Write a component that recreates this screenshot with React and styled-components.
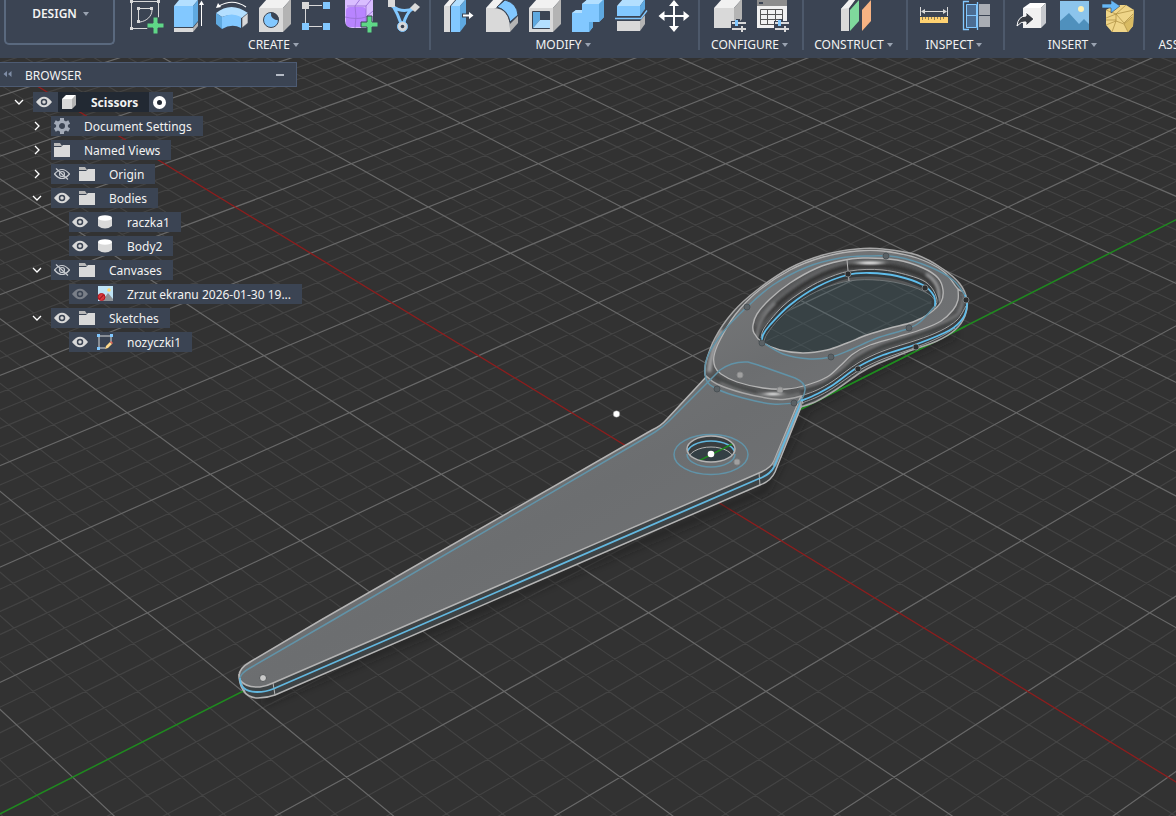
import React, { useState } from "react";
import styled, { createGlobalStyle } from "styled-components";

const GlobalStyle = createGlobalStyle`
  * {
    box-sizing: border-box;
  }
  body {
    margin: 0;
    background: #323232;
    color: #f2f2f2;
    font-family: "Noto Sans", Roboto, sans-serif;
    font-size: 12px;
    overflow: hidden;
  }
  button {
    border: 0;
    padding: 0;
    background: none;
    color: inherit;
    font: inherit;
    cursor: pointer;
  }
`;

const Page = styled.div`
  display: flex;
  flex-direction: column;
  height: 100vh;
`;

/* ---------- toolbar ---------- */

const Toolbar = styled.header`
  display: flex;
  align-items: flex-start;
  flex: none;
  height: 58px;
  padding-left: 4px;
  overflow: hidden;
  background: #3b4453;
`;

const WorkspaceButton = styled.button`
  display: flex;
  align-items: flex-start;
  justify-content: center;
  flex: none;
  gap: 6px;
  width: 111px;
  height: 45px;
  margin-right: 6px;
  padding: 6px 0 0 2px;
  border: 2px solid #5a697e;
  border-top: 0;
  border-radius: 0 0 5px 5px;
  font-size: 12px;
  font-weight: 600;
  line-height: 16px;
`;

const Group = styled.section`
  display: flex;
  flex-direction: column;
  align-items: center;
  flex: none;
  min-width: ${(p) => p.$width}px;
  height: 50px;
  border-right: 2px solid #4d596b;
`;

const Tools = styled.div`
  display: flex;
  flex: none;
  height: 37px;
`;

const Tool = styled.button`
  width: 43px;
  height: 34px;
  svg {
    display: block;
  }
`;

const GroupMenu = styled.button`
  display: flex;
  flex: none;
  gap: 3px;
  padding-right: 3px;
  font-size: 12px;
  line-height: 16px;
`;

const Caret = styled.span`
  margin-top: 6px;
  border: 3px solid transparent;
  border-top: 4px solid #9aa3b1;
  border-bottom: 0;
`;

/* ---------- viewport ---------- */

const Viewport = styled.main`
  position: relative;
  flex: 1;
  min-height: 0;
`;

const Scene = styled.svg`
  position: absolute;
  inset: 0;
  width: 100%;
  height: 100%;
`;

const Browser = styled.aside`
  position: relative;
  width: 297px;
  padding-top: 4px;
`;

const BrowserHead = styled.div`
  display: flex;
  align-items: center;
  height: 25px;
  padding: 0 12px 0 3px;
  border: 1px solid #4d5b73;
  border-left: 0;
  background: #3b4453;
`;

const BrowserTitle = styled.h2`
  flex: 1;
  margin: 0 0 0 13px;
  padding-top: 2px;
  font-size: 12px;
  font-weight: 400;
`;

const SmallButton = styled.button`
  display: flex;
  align-items: center;
  height: 20px;
`;

const Tree = styled.ul`
  display: flex;
  flex-direction: column;
  gap: 4px;
  margin: 5px 0 0;
  padding: 0;
  list-style: none;
`;

const Row = styled.li`
  display: flex;
  height: 20px;
  padding-left: ${(p) => 5 + p.$level * 18}px;
`;

const Toggle = styled.button`
  display: flex;
  align-items: center;
  justify-content: center;
  flex: none;
  width: 28px;
  height: 20px;
`;

const Indent = styled.span`
  flex: none;
  width: 28px;
`;

const Item = styled.div`
  display: flex;
  align-items: center;
  flex: none;
  background: #3b4453;
`;

const Slot = styled.span`
  display: flex;
  align-items: center;
  flex: none;
  width: 25px;
  height: 20px;
  padding-left: 3px;
`;

const EyeButton = styled.button`
  display: flex;
  align-items: center;
  flex: none;
  width: 25px;
  height: 20px;
  padding-left: 3px;
  opacity: ${(p) => (p.$dim ? 0.4 : 1)};
`;

const Name = styled.span`
  display: flex;
  align-items: center;
  height: 20px;
  background: ${(p) => (p.$active ? "#222933" : "transparent")};
  font-weight: ${(p) => (p.$active ? 700 : 400)};
`;

const Text = styled.span`
  padding: 2px 11px 0 8px;
  line-height: 20px;
  white-space: nowrap;
`;

const ActiveRadio = styled.input`
  appearance: none;
  width: 13px;
  height: 13px;
  margin: 0 7px 0 4px;
  border: 4px solid #fff;
  border-radius: 50%;
  background: #222933;
`;

/* ---------- toolbar icons, each drawn on a 43x34 cell ---------- */

const WHITE = "#f1f1f1";
const GREY = "#d9d9d9";
const DARK = "#b4b4b4";
const BLUE = "#82c8ff";
const LIGHT = "#b3dfff";
const DEEP = "#5fa9e0";
const INK = "#3b4453";

const Plus = ({ x, y }) => (
  <path
    d={`M${x - 2} ${y - 8}h5v6h6v5h-6v6h-5v-6h-6v-5h6z`}
    fill="#5fd787"
    stroke={INK}
    strokeWidth="1"
  />
);

const Sliders = ({ y }) => (
  <g>
    <path d={`M23 ${y - 2}h5v-2h4v2h7v9h-3v3h-4v-3h-9z`} fill={INK} />
    <path d={`M24 ${y}h14M24 ${y + 6}h14`} stroke={GREY} strokeWidth="2" />
    <path d={`M28.500 ${y - 3}v6`} stroke={BLUE} strokeWidth="3" />
    <path d={`M34 ${y + 3}v6`} stroke={GREY} strokeWidth="2" />
  </g>
);

const icons = {
  sketch: (
    <g>
      <path d="M6.5 1.5h27v16M6.5 1.5v27h16" fill="none" stroke={GREY} />
      <path d="M13.5 8.5h13M13.5 8.5v13M27 10c0 6-5 11-12 12" fill="none" stroke={GREY} />
      <path d="M5 0h3v3H5zM32 0h3v3h-3zM5 27h3v3H5zM12 7h3v3h-3zM25 7h3v3h-3zM12 20h3v3h-3z" fill={GREY} />
      <Plus x={30} y={25} />
    </g>
  ),
  extrude: (
    <g>
      <path d="M6 6L11 0H30L25 6z" fill={LIGHT} />
      <path d="M6 6h19v21H6z" fill={BLUE} />
      <path d="M25 6l5-6v21l-5 6z" fill={DEEP} />
      <path d="M6 28h19v4H6z" fill={GREY} />
      <path d="M25 28l5-6v4l-5 6z" fill={DARK} />
      <path d="M33.500 26V4" stroke="#fff" />
      <path d="M31 5l2.500-4.500L36 5z" fill="#fff" />
    </g>
  ),
  revolve: (
    <g>
      <path d="M5 13Q20 1 37 13L31 18Q20 13 11 17z" fill={LIGHT} />
      <path d="M5 13l6 4v12l-6-5z" fill={DEEP} />
      <path d="M11 17q10-5 19 0v11q-9-5-19 1z" fill={BLUE} />
      <path d="M31 18l6-5v10l-6 5z" fill={GREY} stroke={INK} strokeWidth="0.600" />
      <path d="M8 6q14-8 27 1" fill="none" stroke="#fff" strokeWidth="1.200" />
      <path d="M5 8l2-5 3 4z" fill="#fff" />
    </g>
  ),
  hole: (
    <g>
      <path d="M5 8l8-9h24l-8 9z" fill={WHITE} />
      <path d="M5 8h24v24H5z" fill={GREY} />
      <path d="M29 8l8-9v25l-8 8z" fill={DARK} />
      <circle cx="17" cy="20" r="7.500" fill={BLUE} stroke={INK} />
      <path d="M17 12.500q-1 7 8 8a7.500 7.500 0 0 0-8-8z" fill={INK} />
    </g>
  ),
  pattern: (
    <g>
      <path d="M12 5.500h13M12 26.500h13M8.500 9v14" stroke={GREY} />
      <path d="M5 2h7v7H5z" fill={GREY} />
      <path d="M26 2h7v7h-7zM5 23h7v7H5zM26 23h7v7h-7z" fill={BLUE} />
    </g>
  ),
  form: (
    <g>
      <rect x="5" y="-6" width="28" height="34" rx="7" fill="#d9bdff" />
      <rect x="6" y="7" width="20" height="20" rx="4" fill="#b884ff" />
      <path d="M5 17q12 3 21 0l7-6M15 28q2-12 0-22l6-8M26 25V6l5-6M7 6h19" fill="none" stroke="#9a70d6" strokeWidth="0.900" />
      <Plus x={29} y={24} />
    </g>
  ),
  links: (
    <g>
      <path d="M9 4q6 10 10 22M31 8q-8 4-11 18M9 6q11 8 22 2" fill="none" stroke={BLUE} strokeWidth="3" />
      <path d="M17 12h7l-4 6z" fill={INK} />
      <path d="M5-1h7v8H5z" fill={GREY} />
      <path d="M32 3l5 4-5 5-5-4z" fill={GREY} />
      <circle cx="19.500" cy="26.500" r="5" fill={GREY} stroke={BLUE} />
      <circle cx="19.500" cy="26.500" r="1.800" fill={INK} />
    </g>
  ),
  press: (
    <g>
      <path d="M8 6l6-7h6l-6 7z" fill={WHITE} />
      <path d="M8 6h6v26H8z" fill={GREY} />
      <path d="M15 6l6-7h9l-6 7z" fill={LIGHT} />
      <path d="M15 6h9v26h-9z" fill={BLUE} />
      <path d="M24 6l6-7v25l-6 8z" fill={DEEP} />
      <path d="M26 15.500h8" stroke={INK} strokeWidth="4" />
      <path d="M27 15.500h7" stroke="#fff" strokeWidth="2" />
      <path d="M33 12l4.500 3.500L33 19z" fill="#fff" />
    </g>
  ),
  fillet: (
    <g>
      <path d="M7 8l8-9h10l-8 9z" fill={WHITE} />
      <path d="M7 8h8q17 1 16 24H7z" fill={GREY} />
      <path d="M31 24l8-8v7l-8 9z" fill={DARK} />
      <path d="M18 7l8-7q12 3 13 15l-8 7Q29 10 18 7z" fill={BLUE} stroke={INK} />
    </g>
  ),
  shell: (
    <g>
      <path d="M7 8l8-9h24l-8 9z" fill={WHITE} />
      <path d="M7 8h24v24H7z" fill={GREY} />
      <path d="M31 8l8-9v25l-8 8z" fill={DARK} />
      <path d="M10.500 11.500h17v17h-17z" fill={INK} stroke={INK} />
      <path d="M11 12l7 0v8l-7 8z" fill={DEEP} />
      <path d="M11 28l7-8h10v8z" fill={LIGHT} />
    </g>
  ),
  combine: (
    <g>
      <path d="M7 13l4-3h6v-6l6-5h16v18l-5 5h-6v5l-4 5H7z" fill={BLUE} />
      <path d="M7 13l4-3h6v3zM17 4l6-5h16l-5 5z" fill={LIGHT} />
      <path d="M34 4l5-5v18l-5 5zM24 22h4v5l-4 5z" fill={DEEP} />
    </g>
  ),
  split: (
    <g>
      <path d="M9 6l6-7h22l-5 7z" fill={LIGHT} />
      <path d="M9 6h23v10H9z" fill={BLUE} />
      <path d="M32 6l5-7v10l-5 7z" fill={DEEP} />
      <path d="M7 18.500h26l6-8" fill="none" stroke={BLUE} strokeWidth="1.300" />
      <path d="M9 21h23v10H9z" fill={GREY} />
      <path d="M32 21l5-6v9l-5 7z" fill={DARK} />
    </g>
  ),
  move: (
    <g fill="#fff">
      <path d="M10 15h26v2H10zM22 4h2v24h-2z" />
      <path d="M7.500 16l6-5v10zM38.500 16l-6-5v10zM23 0l5 6H18zM23 32l5-6H18z" />
    </g>
  ),
  configure: (
    <g>
      <path d="M6 8l8-9h20l-8 9z" fill={WHITE} />
      <path d="M6 8h20v20H6z" fill={GREY} />
      <path d="M26 8l8-9v20l-8 9z" fill={DARK} />
      <Sliders y={23} />
    </g>
  ),
  table: (
    <g>
      <path d="M6-2h30v30H6z" fill={WHITE} />
      <path d="M6-2h30v8H6z" fill="#8d8d8d" />
      <path d="M8 2h4v2H8z" fill={INK} />
      <path d="M9.500 9.500h22v15h-22zM9.500 14.500h22M9.500 19.500h22M16.500 9.500v15M24.500 9.500v15" fill="none" stroke="#555" />
      <Sliders y={23} />
    </g>
  ),
  plane: (
    <g>
      <path d="M7 9l8-9h6l-6 8v23H7z" fill={GREY} />
      <path d="M7 9l8-9h6l-6 8z" fill={WHITE} />
      <path d="M16 10l9-10v21l-9 10z" fill="#7fd99c" />
      <path d="M28 10l9-10v21l-9 10z" fill="#f7b383" />
    </g>
  ),
  measure: (
    <g>
      <path d="M7.500 7v9M34.500 7v9M9 11.500h24" stroke={GREY} />
      <path d="M8 11.500l4-2.500v5zM34 11.500l-4-2.500v5z" fill={GREY} />
      <path d="M7 17h28v6H7z" fill="#ffd271" />
      <path d="M9.500 17v3M12.500 17v2M15.500 17v3M18.500 17v2M21.500 17v3M24.500 17v2M27.500 17v3M30.500 17v2" stroke="#8f7d58" />
    </g>
  ),
  section: (
    <g>
      <path d="M10 4h11v24H10z" fill="#4b6d93" />
      <path d="M10.500 4.500h10v23h-10zM10.500 15.500h10" fill="none" stroke={BLUE} />
      <path d="M13 1.500H7.500V6M7.500 6v18M7.500 24v5.500H13M21.500 2v28" fill="none" stroke={BLUE} strokeWidth="1.300" />
      <path d="M23 4h11v11H23zM23 16h11v11H23z" fill="#a9adb4" />
    </g>
  ),
  derive: (
    <g>
      <path d="M13 8l7-5h16l-5 5z" fill="#fff" />
      <path d="M13 8h18v20H13z" fill={WHITE} />
      <path d="M31 8l5-5v20l-5 5z" fill="#c6c9ce" />
      <path d="M7 26q1-10 9-10v-4l8 7-8 7v-4q-5-1-9 4z" fill="#393d44" stroke="#fff" />
    </g>
  ),
  canvas: (
    <g>
      <path d="M7 1h29v29H7z" fill="#8cc4ec" />
      <circle cx="28" cy="9" r="3" fill="#fdf0b5" />
      <path d="M7 21l9-8 10 11 5-5 5 5v6H7z" fill="#4f90bd" />
    </g>
  ),
  mesh: (
    <g>
      <path d="M10 10l8-5h12l8 5-1 16-5 6H16l-6-7z" fill="#efd588" />
      <path d="M38 10l-1 16-5 6-4-8 8-7z" fill="#d9bb63" />
      <path d="M10 10l10 4 18-4M10 18l10-4 8 9 9-9M10 25l10-4 0-7M20 21l8 3 8-7M16 32l4-11M28 24l4 8M30 5l-10 9M10 20h10" fill="none" stroke="#a98b3d" strokeWidth="0.700" />
      <path d="M6 4h9V0l9 6-9 7V8H6z" fill="#66b8f7" stroke={INK} strokeWidth="0.600" />
    </g>
  ),
};

const groups = [
  { label: "CREATE", width: 310, tools: ["sketch", "extrude", "revolve", "hole", "pattern", "form", "links"] },
  { label: "MODIFY", width: 269, tools: ["press", "fillet", "shell", "combine", "split", "move"] },
  { label: "CONFIGURE", width: 104, tools: ["configure", "table"] },
  { label: "CONSTRUCT", width: 104, tools: ["plane"] },
  { label: "INSPECT", width: 97, tools: ["measure", "section"] },
  { label: "INSERT", width: 140, tools: ["derive", "canvas", "mesh"] },
  { label: "ASSEMBLE", width: 100, tools: [] },
];

/* ---------- tree icons ---------- */

const Eye = ({ hidden }) => (
  <svg width="16" height="16" viewBox="0 0 16 16">
    {hidden ? (
      <g fill="none" stroke="#c9ccd1" strokeWidth="1.200">
        <path d="M0.500 8Q8-1 15.500 8 8 17 0.500 8z" />
        <circle cx="8" cy="8" r="2.500" />
        <path d="M2 2.500l12 11" />
      </g>
    ) : (
      <g>
        <path d="M0 8Q8-2.500 16 8 8 18.500 0 8z" fill={GREY} />
        <circle cx="8" cy="8" r="2.500" fill={GREY} stroke="#3b4453" strokeWidth="1.500" />
      </g>
    )}
  </svg>
);

const Chevron = ({ open }) => (
  <svg width="10" height="10" viewBox="0 0 10 10">
    <path
      d={open ? "M1 3l4 4 4-4" : "M3 1l4 4-4 4"}
      fill="none"
      stroke="#fff"
      strokeWidth="1.300"
    />
  </svg>
);

const glyphs = {
  cube: (
    <g>
      <path d="M1 5l4-4h10l-3 4z" fill="#fff" />
      <path d="M1 5h10v10H1z" fill={GREY} />
      <path d="M11 5l4-4v10l-4 4z" fill={DARK} />
    </g>
  ),
  gear: (
    <g>
      <path d="M8 0v16M0.800 4l14.400 8M0.800 12l14.400-8" stroke="#a3abb8" strokeWidth="4" />
      <circle cx="8" cy="8" r="4.500" fill="#3b4453" stroke="#a3abb8" strokeWidth="3" />
    </g>
  ),
  folder: (
    <g>
      <path d="M0 1h6l2 3H0z" fill="#b9b9b9" />
      <path d="M0 5h7l2-2h7v12H0z" fill={GREY} />
    </g>
  ),
  body: (
    <g>
      <path d="M1 4v8q7 5 14 0V4z" fill={GREY} />
      <ellipse cx="8" cy="4" rx="7" ry="2.700" fill="#fff" />
    </g>
  ),
  picture: (
    <g>
      <path d="M1 0h15v15H1z" fill="#bfe3f5" />
      <circle cx="12" cy="4" r="1.800" fill="#ffd76a" />
      <path d="M5 15l6-8 5 6v2z" fill="#8d9296" />
      <circle cx="4.500" cy="11" r="3.500" fill="#d9363b" stroke="#b3161d" />
      <path d="M2.500 13l4-4" stroke="#7c1014" />
    </g>
  ),
  sketch: (
    <g>
      <path d="M2 2h12v6M2 2v12h6" fill="none" stroke={GREY} />
      <path d="M0 0h3v3H0zM13 0h3v3h-3zM0 13h3v3H0z" fill={BLUE} />
      <path d="M8 15l1-3 4-4 2 2-4 4z" fill="#ffd98a" />
      <path d="M13 8l1-1 2 2-1 1z" fill="#e8645a" />
    </g>
  ),
};

const nodes = [
  { name: "Document Settings", level: 1, open: false, icon: "gear" },
  { name: "Named Views", level: 1, open: false, icon: "folder" },
  { name: "Origin", level: 1, open: false, icon: "folder", eye: "hidden" },
  { name: "Bodies", level: 1, open: true, icon: "folder", eye: "shown" },
  { name: "raczka1", level: 2, icon: "body", eye: "shown" },
  { name: "Body2", level: 2, icon: "body", eye: "shown" },
  { name: "Canvases", level: 1, open: true, icon: "folder", eye: "hidden" },
  { name: "Zrzut ekranu 2026-01-30 19...", level: 2, icon: "picture", eye: "dim" },
  { name: "Sketches", level: 1, open: true, icon: "folder", eye: "shown" },
  { name: "nozyczki1", level: 2, icon: "sketch", eye: "shown" },
];

function TreeRow({ node, active, onActivate }) {
  const { name, level, open, icon, eye } = node;
  return (
    <Row $level={level}>
      {open === undefined ? (
        <Indent />
      ) : (
        <Toggle aria-label={`${open ? "Collapse" : "Expand"} ${name}`}>
          <Chevron open={open} />
        </Toggle>
      )}
      <Item>
        {eye && (
          <EyeButton $dim={eye === "dim"} aria-label={`Visibility of ${name}`}>
            <Eye hidden={eye === "hidden"} />
          </EyeButton>
        )}
        <Name $active={active}>
          <Slot>
            <svg width="16" height="16" viewBox="0 0 16 16">
              {glyphs[icon]}
            </svg>
          </Slot>
          <Text>{name}</Text>
        </Name>
        {onActivate && (
          <ActiveRadio
            type="radio"
            aria-label={`Activate ${name}`}
            checked={active}
            onChange={onActivate}
          />
        )}
      </Item>
    </Row>
  );
}

/* ---------- 3D scene ---------- */

// ground plane to screen: k grows towards the camera, m to the right
function project(i, j) {
  const k = i - j;
  const m = i + j;
  const w = 1 - 0.0391 * k;
  const x = (672.3 - 37.25 * k + 115.5 * m) / w;
  const y = (474.2 + 45.35 * k) / w;
  return `${x.toFixed(1)} ${y.toFixed(1)}`;
}

const NEAR = 7;
const FAR = -11;
const alongGreen = (i) => `M${project(i, i - NEAR)}L${project(i, i - FAR)}`;
const alongRed = (j) => `M${project(j + FAR, j)}L${project(j + NEAR, j)}`;

let minor = "";
let major = "";
for (let n = -60; n <= 60; n++) {
  const d = alongGreen(n / 5) + alongRed(n / 5);
  if (n % 5 === 0) {
    if (n !== 0) major += d;
  } else {
    minor += d;
  }
}

// Catmull-Rom through the points, as cubic beziers
function curve(points, closed) {
  const n = points.length;
  const at = (i) =>
    closed ? points[(i + n) % n] : points[Math.max(0, Math.min(n - 1, i))];
  let d = `M${points[0]}`;
  for (let i = 0; i < (closed ? n : n - 1); i++) {
    const [a, b, c, e] = [at(i - 1), at(i), at(i + 1), at(i + 2)];
    d += `C${b[0] + (c[0] - a[0]) / 6} ${b[1] + (c[1] - a[1]) / 6} `;
    d += `${c[0] - (e[0] - b[0]) / 6} ${c[1] - (e[1] - b[1]) / 6} ${c}`;
  }
  return closed ? d + "Z" : d;
}

const bladeTop =
  "M707 376L667 419Q661 426 652 430L321 620L250 662Q236 670 240 680Q246 688 260 687Q267 686 273 683L759 473Q771 468 774 461L801 396Z";
const bladeSide =
  "M239 674Q239 684 243 690Q248 698 258 698Q267 698 275 695L760 485Q771 481 775 472L803 404L801 396L700 420L260 670Z";
const bladeLower = "M239 674Q239 684 243 690Q248 698 258 698Q267 698 275 695L760 485Q771 481 775 472L803 402";
const bladeMid = "M240 678Q240 692 257 692Q266 692 273 689L758 479Q770 475 774 467L801 402";
const bladeSketch =
  "M240 678Q241 673 250 668L333 620L640 441L655 432Q663 427 669 421L707 383L720 370Q732 361 748 362L758 365L795 378Q806 383 805 390Q804 399 797 403";

const outer = [
  [705, 375], [706, 362], [715, 338], [733, 312], [757, 290], [790, 268],
  [823, 255], [857, 249], [883, 249], [917, 255], [943, 269], [960, 284],
  [967, 300], [965, 316], [955, 330], [937, 341], [907, 352], [877, 364],
  [860, 373], [837, 389], [817, 401], [801, 407],
];
const lip = [[801, 396], [787, 399], [773, 399], [743, 393], [717, 384], [705, 375]];
const face = [
  [963, 291], [958, 289], [943, 271], [917, 258], [883, 251], [857, 251],
  [823, 257], [790, 270], [757, 292], [735, 315], [720, 340], [714, 356],
  [715, 367], [721, 374], [737, 382], [763, 388], [787, 389], [807, 385],
  [827, 377], [840, 366], [853, 354], [870, 345], [897, 337], [923, 329],
  [941, 321], [953, 310], [958, 300], [958, 289],
];
const rim = [
  [753, 325], [757, 314], [770, 299], [790, 283], [817, 268], [840, 261],
  [863, 258], [897, 260], [923, 268], [938, 278], [943, 290], [941, 302],
  [930, 313], [913, 322], [890, 328], [867, 335], [847, 343], [827, 350],
  [803, 353], [780, 350], [762, 342], [754, 333],
];
const glass = [
  [764, 342], [767, 334], [780, 318], [803, 299], [830, 286], [857, 280],
  [887, 281], [913, 287], [930, 295], [936, 303], [930, 313], [913, 322],
  [890, 328], [867, 335], [847, 343], [827, 350], [803, 353], [780, 350],
];
const innerEdge = [
  [761, 338], [765, 327], [783, 306], [803, 291], [823, 280], [850, 271],
  [883, 270], [917, 278], [931, 287], [937, 300], [934, 309],
];
const innerSketch = [
  [762, 342], [763, 335], [770, 325], [790, 305], [817, 287], [847, 275],
  [870, 273], [897, 276], [923, 285], [934, 296], [935, 306],
];
const innerSketchBack = [
  [935, 306], [920, 322], [907, 329], [877, 338], [850, 350], [831, 357],
  [810, 359], [783, 354], [762, 342],
];
const outerSketchBack = [
  [795, 403], [773, 404], [743, 398], [717, 389], [706, 379], [707, 358],
  [723, 332], [747, 307], [773, 285], [807, 267], [840, 258], [867, 256],
  [897, 257], [930, 267], [953, 280], [965, 295],
];
const outerSketch = [
  [965, 295], [967, 305], [963, 318], [950, 330], [917, 344], [883, 355],
  [858, 367], [833, 385], [817, 394], [801, 401],
];
const wallLine = [
  [966, 306], [957, 320], [940, 331], [917, 340], [883, 351], [858, 363],
  [833, 381], [817, 390], [801, 396],
];
const underLine = [
  [955, 328], [940, 337], [917, 347], [883, 359], [858, 371], [833, 388],
  [817, 397], [802, 403],
];
const bandMid = [
  [958, 312], [945, 325], [915, 336], [880, 347], [857, 359], [840, 373],
  [822, 385], [800, 391],
];
const bandLight = [
  [963, 294], [962, 306], [952, 318], [915, 332], [878, 344], [855, 356],
  [840, 369], [822, 381], [800, 388],
];
const rimMid = [
  [757, 334], [760, 322], [778, 304], [799, 288], [822, 275], [848, 267],
  [885, 266], [918, 274], [933, 284], [937, 296],
];
const rimLight = [
  [756, 326], [760, 317], [776, 300], [797, 284], [820, 271], [848, 262],
  [885, 261],
];

const handleOutline = curve(outer) + curve(lip).replace("M", "L") + "Z";

const darkDots = [
  [848, 274], [925, 288], [966, 300], [916, 347], [858, 369],
];
const fadedDots = [
  [886, 256], [831, 357], [909, 328], [762, 343], [747, 307], [717, 389],
  [794, 403],
];
const paleDots = [[740, 375], [780, 390], [737, 462]];

function Model() {
  return (
    <Scene
      viewBox="0 58 1176 758"
      preserveAspectRatio="xMidYMid slice"
      role="img"
      aria-label="Scissors model"
      fill="none"
    >
      <defs>
        <filter id="soft" filterUnits="userSpaceOnUse" x="690" y="235" width="290" height="180">
          <feGaussianBlur stdDeviation="1.6" />
        </filter>
        <filter id="glint" filterUnits="userSpaceOnUse" x="690" y="235" width="290" height="180">
          <feGaussianBlur stdDeviation="4 0.8" />
        </filter>
        <filter id="shade" filterUnits="userSpaceOnUse" x="220" y="300" width="760" height="430">
          <feGaussianBlur stdDeviation="4" />
        </filter>
        <linearGradient id="metal" x1="0" y1="0" x2="1" y2="1">
          <stop offset="0" stopColor="#7a7b7c" />
          <stop offset="0.5" stopColor="#6c6e70" />
          <stop offset="1" stopColor="#747577" />
        </linearGradient>
        <clipPath id="handleClip">
          <path d={handleOutline} />
        </clipPath>
        <clipPath id="wallClip">
          <path d={curve(rim, true) + curve(glass, true)} clipRule="evenodd" />
        </clipPath>
        <clipPath id="holeClip">
          <ellipse cx="711" cy="449" rx="24" ry="13" />
        </clipPath>
      </defs>

      <rect y="58" width="1176" height="758" fill="#323232" />
      <path d={minor} stroke="#434343" strokeWidth="1.200" />
      <path d={major} stroke="#686868" strokeWidth="1.200" />
      <path d={alongRed(0)} stroke="#8e1d1d" strokeWidth="1.300" />
      <path d={alongGreen(0)} stroke="#1f8a1f" strokeWidth="1.500" />

      <path d="M262 702L765 490L806 408L880 368L955 334" stroke="#1c1c1c" strokeWidth="5" opacity="0.7" filter="url(#shade)" />
      <path d="M801 409L966 326" stroke="#1f8a1f" strokeWidth="1.500" />

      {/* blade */}
      <path d={bladeSide} fill="#3e4345" />
      <path d={bladeTop} fill="url(#metal)" stroke="#b4b4b4" strokeWidth="1.500" />
      <path d="M803 398L774 466" stroke="#90979a" strokeWidth="4" />
      <path d={bladeLower} stroke="#b4b4b4" strokeWidth="1.500" />
      <path d="M759 473L760 485M273 683L275 695M241 682L245 692" stroke="#b4b4b4" />
      <path d={bladeMid} stroke="#62b8e0" strokeWidth="1.800" />

      {/* pivot hole */}
      <ellipse cx="711" cy="454.500" rx="37" ry="20" stroke="#6193a8" strokeWidth="1.500" />
      <ellipse cx="711" cy="449" rx="24" ry="13" fill="#393d3f" />
      <g clipPath="url(#holeClip)">
        <ellipse cx="711" cy="460" rx="23" ry="13" fill="#343f44" stroke="#b4b4b4" />
        <ellipse cx="711" cy="454" rx="24" ry="13" stroke="#62b8e0" strokeWidth="1.600" />
        <path d={alongGreen(0)} stroke="#1f8a1f" strokeWidth="1.500" />
      </g>
      <path d="M687 454A24 13 0 0 0 735 454" stroke="#6193a8" strokeWidth="1.500" />
      <ellipse cx="711" cy="449" rx="24" ry="13" stroke="#b4b4b4" strokeWidth="1.500" />

      {/* handle */}
      <path d={curve(glass, true)} fill="#46606a" opacity="0.35" />
      <path d={handleOutline + curve(glass, true)} fill="#555657" fillRule="evenodd" />
      <g clipPath="url(#handleClip)">
        <path d={curve(outerSketch)} stroke="#3a3d3f" strokeWidth="9" />
        <path d={curve(bandMid)} stroke="#3e3f40" strokeWidth="4" filter="url(#soft)" />
        <path d={curve(bandLight)} stroke="#7b7c7d" strokeWidth="3" filter="url(#soft)" />
        <path d="M709 372Q711 350 722 330" stroke="#a2a3a4" strokeWidth="4" filter="url(#soft)" />
        <path d="M714 376Q735 389 757 393" stroke="#434445" strokeWidth="4" filter="url(#soft)" />
        <path d="M720 383Q745 394 765 397Q785 399 800 394" stroke="#7f8081" strokeWidth="2" filter="url(#soft)" />
        <ellipse cx="773" cy="394" rx="9" ry="1.500" fill="#fff" filter="url(#glint)" />
      </g>
      <path d={`${curve(face, true)}${curve(rim, true)}`} fill="url(#metal)" fillRule="evenodd" />
      <g clipPath="url(#wallClip)">
        <path d={curve(rimMid)} stroke="#343536" strokeWidth="5" filter="url(#soft)" />
        <path d={curve(rimLight)} stroke="#6c6d6e" strokeWidth="2" filter="url(#soft)" />
        <path d="M757 337Q757 320 775 303" stroke="#838485" strokeWidth="3" filter="url(#soft)" />
        <ellipse cx="870" cy="263" rx="13" ry="1.500" fill="#fff" filter="url(#glint)" />
        <path d="M926 274Q942 284 938 302" stroke="#a2a3a4" strokeWidth="3" filter="url(#soft)" />
      </g>
      <path d={curve(innerSketch)} stroke="#343a3d" strokeWidth="7" />
      <path d={curve(face)} stroke="#b4b4b4" strokeWidth="1.300" />
      <path d={handleOutline} stroke="#a8a8a8" strokeWidth="1.500" />
      <path d={curve(rim, true)} stroke="#b4b4b4" strokeWidth="1.400" />
      <path d={curve(innerEdge)} stroke="#a4a4a4" />
      <path d={curve(glass.slice(0, 10))} stroke="#6f7678" />
      <path d={curve(wallLine)} stroke="#a4a4a4" />
      <path d={curve(underLine)} stroke="#9a9a9a" />
      <path d="M847 260L849 281M801 396L803 404" stroke="#b4b4b4" />

      <path d={bladeSketch} stroke="#6193a8" strokeWidth="1.500" />
      <path d={curve(outerSketchBack)} stroke="#6193a8" strokeWidth="1.500" />
      <path d={curve(innerSketchBack)} stroke="#6193a8" strokeWidth="1.500" />
      <path d={curve(innerSketch)} stroke="#5fbdeb" strokeWidth="1.800" />
      <path d={curve(outerSketch)} stroke="#5fbdeb" strokeWidth="1.800" />

      {fadedDots.map(([x, y]) => (
        <circle key={`${x}-${y}`} cx={x} cy={y} r="3" fill="#5a6165" stroke="#4a5155" />
      ))}
      {darkDots.map(([x, y]) => (
        <circle key={`${x}-${y}`} cx={x} cy={y} r="3" fill="#2b2d2e" stroke="#85898b" strokeWidth="0.800" />
      ))}
      {paleDots.map(([x, y]) => (
        <circle key={`${x}-${y}`} cx={x} cy={y} r="3" fill="#a0a0a0" stroke="#8a8b8c" />
      ))}
      <circle cx="263" cy="678" r="3.500" fill="#c9c9c9" stroke="#55585a" />
      <circle cx="711" cy="454" r="3.300" fill="#fff" />
      <circle cx="616.500" cy="414" r="3.300" fill="#fff" stroke="#777" strokeWidth="0.500" />
    </Scene>
  );
}

export default function App() {
  const [active, setActive] = useState(true);
  return (
    <>
      <GlobalStyle />
      <Page>
        <Toolbar>
          <WorkspaceButton>
            DESIGN <Caret />
          </WorkspaceButton>
          {groups.map((group) => (
            <Group key={group.label} $width={group.width}>
              <Tools>
                {group.tools.map((tool) => (
                  <Tool key={tool} aria-label={tool}>
                    <svg width="43" height="34" viewBox="0 0 43 34">
                      {icons[tool]}
                    </svg>
                  </Tool>
                ))}
              </Tools>
              <GroupMenu>
                {group.label} <Caret />
              </GroupMenu>
            </Group>
          ))}
        </Toolbar>
        <Viewport>
          <Model />
          <Browser>
            <BrowserHead>
              <SmallButton aria-label="Collapse browser">
                <svg width="9" height="7" viewBox="0 0 9 7">
                  <path d="M4 0v6L0.500 3zM8.500 0v6L5 3z" fill="#7f8da6" />
                </svg>
              </SmallButton>
              <BrowserTitle>BROWSER</BrowserTitle>
              <SmallButton aria-label="Minimize browser">
                <svg width="8" height="2" viewBox="0 0 8 2">
                  <path d="M0 0h8v2H0z" fill="#b5bbc5" />
                </svg>
              </SmallButton>
            </BrowserHead>
            <Tree>
              <TreeRow
                node={{ name: "Scissors", level: 0, open: true, icon: "cube", eye: "shown" }}
                active={active}
                onActivate={() => setActive(true)}
              />
              {nodes.map((node) => (
                <TreeRow key={node.name} node={node} />
              ))}
            </Tree>
          </Browser>
        </Viewport>
      </Page>
    </>
  );
}
